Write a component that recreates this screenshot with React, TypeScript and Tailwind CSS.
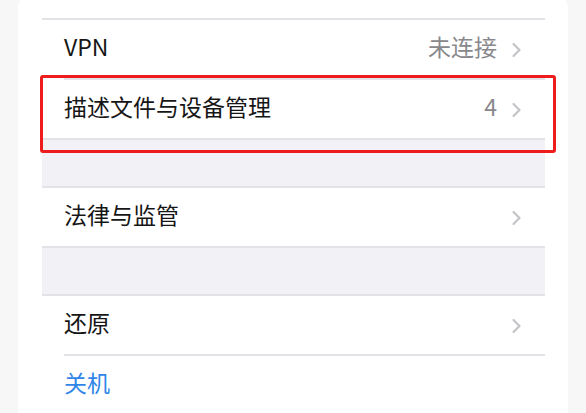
import React from "react";

const Chevron = () => (
  <svg width="11" height="16" viewBox="0 0 11 16" className="shrink-0">
    <path d="M2.5 2 L8.5 8 L2.5 14" fill="none" stroke="#c4c4c8" strokeWidth="2.2" strokeLinecap="round" strokeLinejoin="round" />
  </svg>
);

type RowProps = {
  label: string;
  value?: string;
  chevron?: boolean;
  blue?: boolean;
  border?: "inset" | "full" | "none";
};

const Row = ({ label, value, chevron = true, blue = false, border = "none" }: RowProps) => (
  <div className="relative h-[60px] flex items-center pl-[22px] pr-[23px]">
    <span className={`text-[23px] leading-none mb-[7px] ${blue ? "text-[#2f86e8]" : "text-[#161616]"}`}>{label}</span>
    <div className="flex-1" />
    {value && <span className="text-[23px] leading-none mb-[7px] text-[#88888c] mr-[14px]">{value}</span>}
    {chevron && <Chevron />}
    {border === "inset" && <div className="absolute bottom-0 left-[22px] right-0 h-[2px] bg-[#e3e3e7]" />}
    {border === "full" && <div className="absolute bottom-0 left-0 right-0 h-[2px] bg-[#e3e3e7]" />}
  </div>
);

const Gap = () => (
  <div className="relative h-[48px] bg-[#f2f2f6]">
    <div className="absolute bottom-0 left-0 right-0 h-[2px] bg-[#e3e3e7]" />
  </div>
);

export default function App() {
  return (
    <div
      className="relative w-[586px] h-[413px] overflow-hidden bg-[#f7f7f7]"
      style={{ fontFamily: '"Noto Sans CJK SC", "Noto Sans", sans-serif' }}
    >
      <div className="absolute left-[18px] top-[-6px] w-[550px] h-[430px] bg-white rounded-[14px]">
        <div className="ml-[24px] mt-[24px] w-[503px]">
          <div className="h-[2px] bg-[#e3e3e7]" />
          <Row label="VPN" value="未连接" border="inset" />
          <Row label="描述文件与设备管理" value="4" border="full" />
          <Gap />
          <Row label="法律与监管" border="full" />
          <Gap />
          <Row label="还原" border="inset" />
          <Row label="关机" chevron={false} blue border="full" />
        </div>
      </div>
      <div className="absolute left-[40px] top-[75px] w-[516px] h-[78px] border-[3px] border-[#ee1d1d] rounded-[3px]" />
    </div>
  );
}
